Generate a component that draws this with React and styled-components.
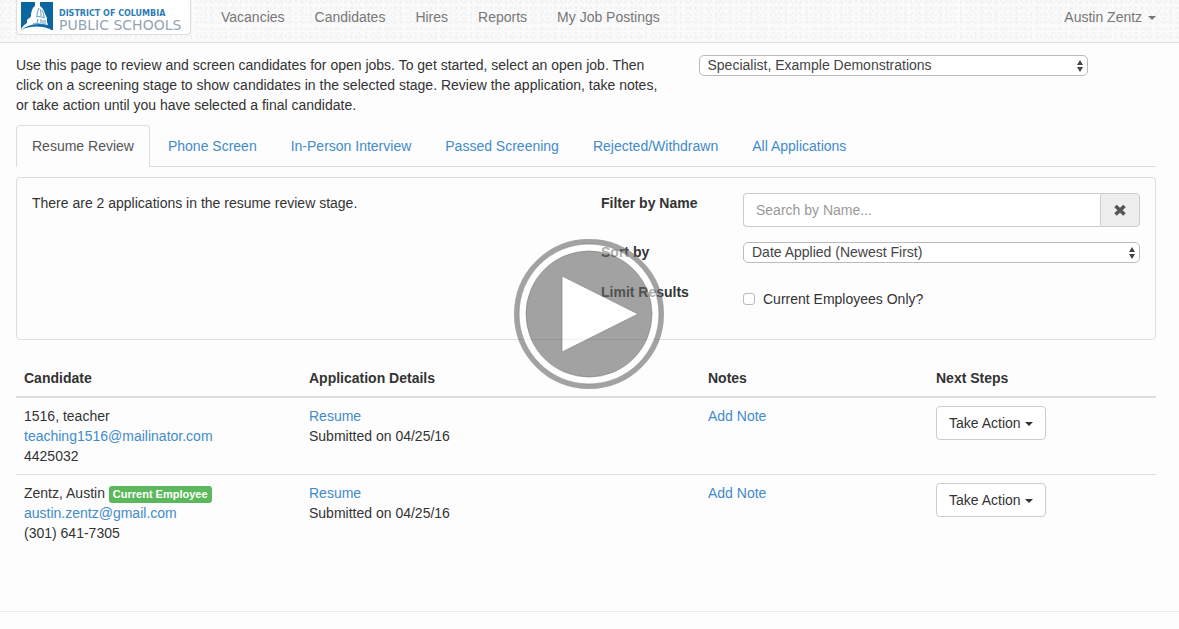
import React, { useState } from "react";
import styled, { createGlobalStyle, css } from "styled-components";

const Global = createGlobalStyle`
  *, *::before, *::after { box-sizing: border-box; }
  body {
    margin: 0;
    background: #fdfdfd;
    color: #333;
    font: 14px/20px "Liberation Sans", Arial, sans-serif;
  }
  button, input, select { font: inherit; color: inherit; }
`;

const Page = styled.div`
  position: relative;
`;

const Navbar = styled.header`
  display: flex;
  align-items: flex-start;
  height: 43px;
  padding: 0 23px 0 16px;
  background-color: #fafafa;
  background-image:
    radial-gradient(circle at 1px 1px, #f0f2f3 1px, transparent 1px),
    radial-gradient(circle at 2px 3px, #f2f4f4 1px, transparent 1px),
    radial-gradient(circle at 4px 2px, #f1f3f4 1px, transparent 1px);
  background-size: 5px 7px, 7px 5px, 11px 9px;
  border-bottom: 1px solid #ddd;
`;

const Brand = styled.a`
  display: block;
  width: 175px;
  height: 35px;
  margin-right: 15px;
  background: #fff;
  border: solid #ddd;
  border-width: 0 1px 1px;
  border-radius: 0 0 4px 4px;
  svg { display: block; }
`;

const Nav = styled.nav`
  display: flex;
  flex: 1;
`;

const navItem = css`
  padding: 7px 15px 15px;
  color: #777;
  text-decoration: none;
`;

const NavLink = styled.a`
  ${navItem}
`;

const UserMenu = styled.button`
  ${navItem}
  padding-right: 0;
  background: none;
  border: 0;
`;

const Caret = styled.span`
  display: inline-block;
  margin-left: ${(p) => p.$gap}px;
  vertical-align: middle;
  border: solid transparent;
  border-width: 4px 4px 0;
  border-top-color: currentColor;
`;

const Main = styled.main`
  padding: 12px 23px 60px 16px;
`;

const Intro = styled.div`
  display: grid;
  grid-template-columns: 7fr 5fr;
  align-items: start;
  margin: 0 -15px 10px;
  > * { margin: 0 15px; }
`;

const SelectWrap = styled.div`
  display: grid;
  align-items: center;
  max-width: ${(p) => p.$max || "none"};
  > * { grid-area: 1 / 1; }
  svg { justify-self: end; margin-right: 4px; pointer-events: none; }
`;

const Select = styled.select`
  appearance: none;
  width: 100%;
  height: 21px;
  padding: 0 20px 1px 8px;
  line-height: 18px;
  color: #444;
  background: #fff;
  border: 1px solid #bbb;
  border-radius: 5px;
`;

const Tabs = styled.nav`
  display: flex;
  gap: 2px;
  border-bottom: 1px solid #ddd;
`;

const Tab = styled.a`
  padding: 10px 15px;
  margin-bottom: -1px;
  border: 1px solid transparent;
  border-radius: 4px 4px 0 0;
  color: #428bca;
  text-decoration: none;
  ${(p) => p.$active && css`
    color: #555;
    background: #fdfdfd;
    border-color: #ddd #ddd #fdfdfd;
  `}
`;

const Panel = styled.section`
  display: grid;
  grid-template-columns: 1fr 1fr;
  column-gap: 30px;
  min-height: 163px;
  margin: 10px 0 20px;
  padding: 15px;
  border: 1px solid #ddd;
  border-radius: 4px;
  p { margin: 0; }
`;

const Filters = styled.form`
  display: grid;
  grid-template-columns: 112px 1fr;
  column-gap: 30px;
  align-content: start;
`;

const FilterLabel = styled.label`
  font-weight: bold;
`;

const Field = styled.div`
  min-height: ${(p) => p.$height}px;
  margin-bottom: ${(p) => p.$after}px;
`;

const SearchGroup = styled.div`
  display: flex;
  height: 34px;
`;

const SearchInput = styled.input`
  flex: 1;
  min-width: 0;
  padding: 6px 12px;
  background: #fff;
  border: 1px solid #ccc;
  border-right: 0;
  border-radius: 4px 0 0 4px;
  &::placeholder { color: #999; opacity: 1; }
`;

const ClearButton = styled.button`
  display: grid;
  place-items: center;
  width: 40px;
  padding: 0;
  color: #555;
  background: #eee;
  border: 1px solid #ccc;
  border-radius: 0 4px 4px 0;
`;

const CheckLabel = styled.label`
  display: flex;
  align-items: center;
  gap: 8px;
  padding-top: 7px;
`;

const Checkbox = styled.input`
  appearance: none;
  width: 12px;
  height: 12px;
  margin: 0;
  background: #fff;
  border: 1px solid #bbb;
  border-radius: 3px;
  &:checked { background: #428bca; }
`;

const Table = styled.table`
  width: 100%;
  table-layout: fixed;
  border-spacing: 0;
  th, td { padding: 8px; text-align: left; vertical-align: top; }
  th { border-bottom: 2px solid #ddd; }
  tr + tr td { border-top: 1px solid #ddd; }
`;

const Column = styled.col`
  width: ${(p) => p.$share}%;
`;

const Link = styled.a`
  color: #428bca;
  text-decoration: none;
`;

const Badge = styled.span`
  display: inline-block;
  height: 17px;
  padding: 0 4px;
  border-radius: 3px;
  background: #5cb85c;
  color: #fff;
  font-size: 11px;
  font-weight: bold;
  line-height: 17px;
  vertical-align: bottom;
`;

const ActionButton = styled.button`
  display: block;
  height: 34px;
  padding: 6px 12px;
  white-space: nowrap;
  background: #fff;
  border: 1px solid #ccc;
  border-radius: 4px;
`;

const Footer = styled.footer`
  border-top: 1px solid #eaeaea;
`;

const PlayButton = styled.button`
  position: fixed;
  top: 50%;
  left: 50%;
  width: 150px;
  height: 150px;
  margin: -76px 0 0 -76px;
  padding: 0;
  background: none;
  border: 0;
  border-radius: 50%;
  svg { display: block; }
`;

const LogoTitle = styled.text`
  font: bold 8px "DejaVu Sans", sans-serif;
  fill: #2b7db3;
`;

const LogoName = styled.text`
  font: 14px "DejaVu Sans", sans-serif;
  fill: #93a5b3;
`;

const Logo = () => (
  <svg width="173" height="34" viewBox="17 0 173 34" role="img" aria-label="District of Columbia Public Schools">
    <rect x="21" y="2" width="32" height="28" fill="#0a66a0" />
    <path d="M35 2h5v4c2 1 3 3 4 5l2 5 1 2v4l1 3c-7-2-15-1-20 1-3 1-5 3-7 4v-1c2-3 4-5 6-6v-3l1-1c1-1 2-1 3-3 0-5 2-9 4-10z" fill="#fff" />
    <path d="M21 30c7-4 19-5 29-1l1 1z" fill="#fff" />
    <path d="M39 8c-1 2-2 5-2 8M40 9c1 2 1 5 1 7M42 10c1 2 2 4 2 7M36 17c3-1 6 0 9 1M38 19l-1 4M41 19v4M43 20v4M45 20v4M33 24c5-1 9 0 14 2" fill="none" stroke="#2b7db3" strokeWidth=".8" />
    <LogoTitle x="59" y="16">DISTRICT OF COLUMBIA</LogoTitle>
    <LogoName x="59" y="30">PUBLIC SCHOOLS</LogoName>
  </svg>
);

const Arrows = () => (
  <svg width="8" height="14" viewBox="0 0 8 14" aria-hidden="true">
    <path d="M1 6l3-5 3 5zM1 8l3 5 3-5z" fill="#444" />
  </svg>
);

const Cross = () => (
  <svg width="14" height="14" viewBox="0 0 14 14" aria-hidden="true">
    <path d="M2.5 3l9 8.500M11.500 3l-9 8.500" stroke="currentColor" strokeWidth="3.6" />
  </svg>
);

const navLinks = ["Vacancies", "Candidates", "Hires", "Reports", "My Job Postings"];
const stages = ["Resume Review", "Phone Screen", "In-Person Interview", "Passed Screening", "Rejected/Withdrawn", "All Applications"];
const candidates = [
  { name: "1516, teacher", email: "teaching1516@mailinator.com", phone: "4425032", submitted: "04/25/16" },
  { name: "Zentz, Austin", email: "austin.zentz@gmail.com", phone: "(301) 641-7305", submitted: "04/25/16", employee: true },
];

export default function App() {
  const [name, setName] = useState("");
  return (
    <Page>
      <Global />
      <Navbar>
        <Brand href="#"><Logo /></Brand>
        <Nav>
          {navLinks.map((label) => <NavLink key={label} href="#">{label}</NavLink>)}
        </Nav>
        <UserMenu type="button">Austin Zentz <Caret $gap={2} /></UserMenu>
      </Navbar>
      <Main>
        <Intro>
          <p>
            Use this page to review and screen candidates for open jobs. To get started, select an open job. Then
            click on a screening stage to show candidates in the selected stage. Review the application, take notes,
            or take action until you have selected a final candidate.
          </p>
          <SelectWrap $max="389px">
            <Select aria-label="Open job"><option>Specialist, Example Demonstrations</option></Select>
            <Arrows />
          </SelectWrap>
        </Intro>
        <Tabs>
          {stages.map((label, i) => <Tab key={label} href="#" $active={i === 0}>{label}</Tab>)}
        </Tabs>
        <Panel>
          <p>There are 2 applications in the resume review stage.</p>
          <Filters onSubmit={(e) => e.preventDefault()}>
            <FilterLabel htmlFor="name">Filter by Name</FilterLabel>
            <Field $height={34} $after={15}>
              <SearchGroup>
                <SearchInput id="name" type="text" placeholder="Search by Name..." value={name} onChange={(e) => setName(e.target.value)} />
                <ClearButton type="button" aria-label="Clear" onClick={() => setName("")}><Cross /></ClearButton>
              </SearchGroup>
            </Field>
            <FilterLabel htmlFor="sort">Sort by</FilterLabel>
            <Field $height={25} $after={15}>
              <SelectWrap>
                <Select id="sort"><option>Date Applied (Newest First)</option></Select>
                <Arrows />
              </SelectWrap>
            </Field>
            <FilterLabel htmlFor="employees">Limit Results</FilterLabel>
            <Field $height={27} $after={0}>
              <CheckLabel><Checkbox id="employees" type="checkbox" />Current Employees Only?</CheckLabel>
            </Field>
          </Filters>
        </Panel>
        <Table>
          <colgroup>
            <Column $share={25} /><Column $share={35} /><Column $share={20} /><Column $share={20} />
          </colgroup>
          <thead>
            <tr><th>Candidate</th><th>Application Details</th><th>Notes</th><th>Next Steps</th></tr>
          </thead>
          <tbody>
            {candidates.map((c) => (
              <tr key={c.email}>
                <td>
                  {c.name} {c.employee && <Badge>Current Employee</Badge>}<br />
                  <Link href="#">{c.email}</Link><br />
                  {c.phone}
                </td>
                <td><Link href="#">Resume</Link><br />Submitted on {c.submitted}</td>
                <td><Link href="#">Add Note</Link></td>
                <td><ActionButton type="button">Take Action <Caret $gap={0} /></ActionButton></td>
              </tr>
            ))}
          </tbody>
        </Table>
      </Main>
      <Footer />
      <PlayButton type="button" aria-label="Play">
        <svg width="150" height="150" viewBox="0 0 150 150" aria-hidden="true">
          <circle cx="75" cy="75" r="72.500" fill="none" stroke="#666" strokeWidth="5" strokeOpacity=".6" />
          <path fillRule="evenodd" d="M12 75a63 63 0 1 0 126 0a63 63 0 1 0-126 0zM48 37v76l76-38z" fill="#666" fillOpacity=".6" />
          <circle cx="75" cy="75" r="66.500" fill="none" stroke="#fff" strokeWidth="7" strokeOpacity=".6" />
          <path d="M48 37v76l76-38z" fill="#fff" fillOpacity=".6" />
          <g fill="none" stroke="#777" strokeOpacity=".6">
            <circle cx="75" cy="75" r="70" />
            <circle cx="75" cy="75" r="63" />
            <path d="M48 37v76l76-38z" />
          </g>
        </svg>
      </PlayButton>
    </Page>
  );
}
